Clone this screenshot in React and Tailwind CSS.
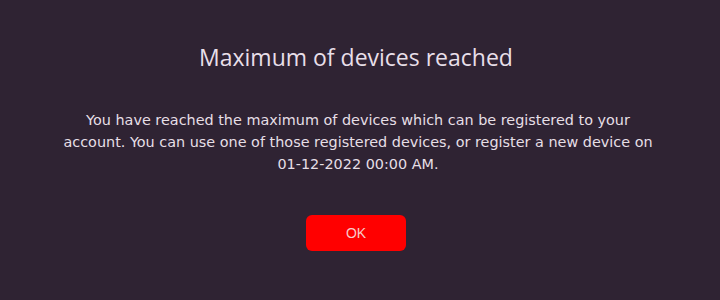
export default function App() {
  return (
    <div className="w-[720px] h-[300px] bg-[#2f2333] flex flex-col items-center font-['DejaVu_Sans',sans-serif]">
      <h1 className="mt-[42px] mr-[8px] text-[23px] leading-[30px] text-[#e8dfe9] font-['Open_Sans',sans-serif]">
        Maximum of devices reached
      </h1>
      <p className="mt-[37px] mr-[4px] w-[596px] text-center text-[14.4px] leading-[22px] text-[#e6dfe6]">
        You have reached the maximum of devices which can be registered to your account. You can use one of those registered devices, or register a new device on 01-12-2022 00:00 AM.
      </p>
      <button className="mt-[40px] mr-[8px] w-[100px] h-[36px] rounded-[6px] bg-[#ff0000] text-[#f7caca] text-[14px] font-['Liberation_Sans',sans-serif]">
        OK
      </button>
    </div>
  );
}
